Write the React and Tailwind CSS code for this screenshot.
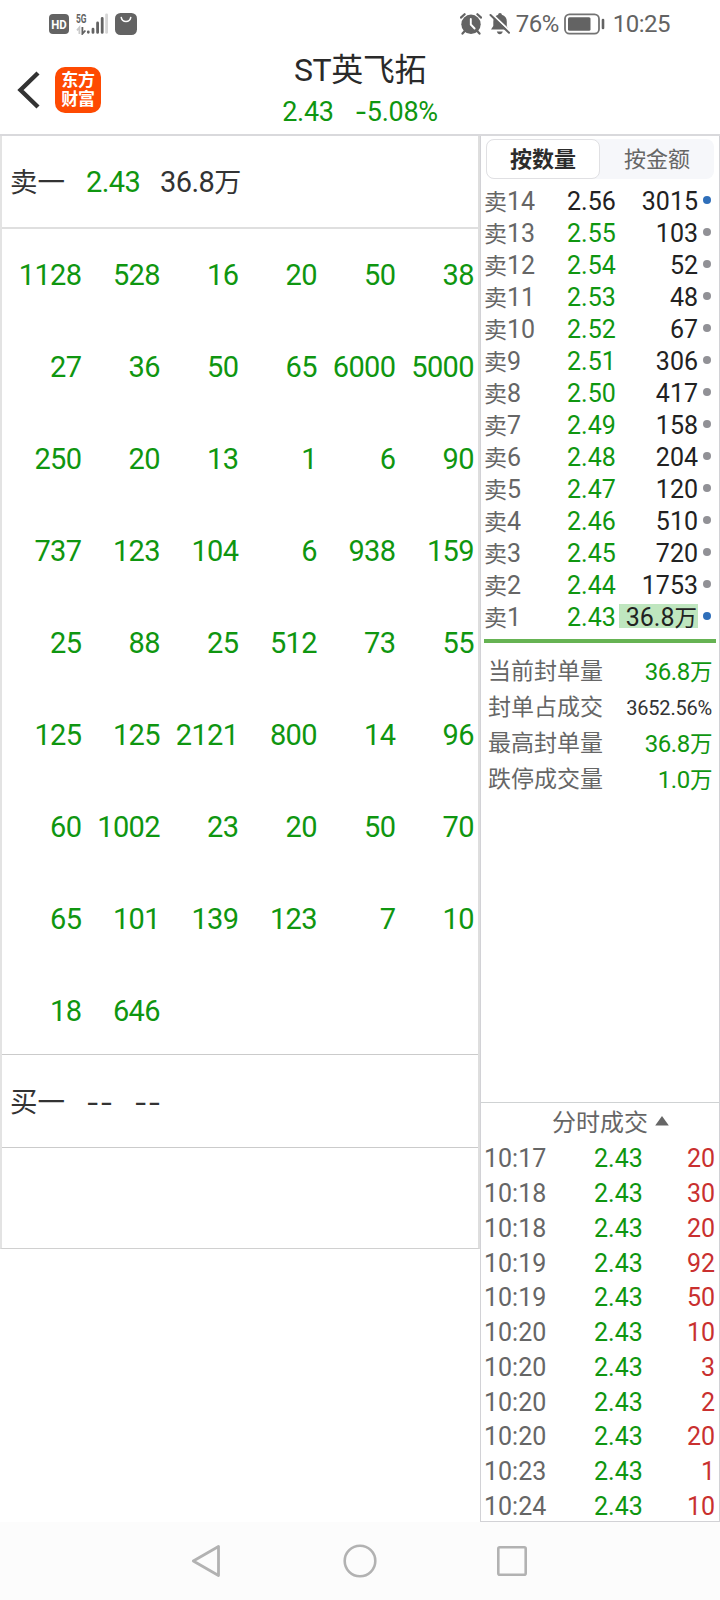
import React from "react";

const sells = [
  {level: 14, price: "2.56", amount: "3015", flat: true, active: true},
  {level: 13, price: "2.55", amount: "103"},
  {level: 12, price: "2.54", amount: "52"},
  {level: 11, price: "2.53", amount: "48"},
  {level: 10, price: "2.52", amount: "67"},
  {level: 9, price: "2.51", amount: "306"},
  {level: 8, price: "2.50", amount: "417"},
  {level: 7, price: "2.49", amount: "158"},
  {level: 6, price: "2.48", amount: "204"},
  {level: 5, price: "2.47", amount: "120"},
  {level: 4, price: "2.46", amount: "510"},
  {level: 3, price: "2.45", amount: "720"},
  {level: 2, price: "2.44", amount: "1753"},
  {level: 1, price: "2.43", amount: "36.8", wan: true, active: true},
];

const orders = [
  1128, 528, 16, 20, 50, 38,
  27, 36, 50, 65, 6000, 5000,
  250, 20, 13, 1, 6, 90,
  737, 123, 104, 6, 938, 159,
  25, 88, 25, 512, 73, 55,
  125, 125, 2121, 800, 14, 96,
  60, 1002, 23, 20, 50, 70,
  65, 101, 139, 123, 7, 10,
  18, 646,
];

const stats = [
  {label: "当前封单量", value: "36.8", wan: true},
  {label: "封单占成交", value: "3652.56%"},
  {label: "最高封单量", value: "36.8", wan: true},
  {label: "跌停成交量", value: "1.0", wan: true},
];

const trades = [
  ["10:17", 20],
  ["10:18", 30],
  ["10:18", 20],
  ["10:19", 92],
  ["10:19", 50],
  ["10:20", 10],
  ["10:20", 3],
  ["10:20", 2],
  ["10:20", 20],
  ["10:23", 1],
  ["10:24", 10],
];

const StatusBar = () => (
  <div className="flex h-[46px] items-center pl-[49px] pr-[50px] pt-px text-[#636363]">
    <svg className="h-5 w-5" viewBox="0 0 20 20">
      <rect width="20" height="20" rx="4" fill="#636363" />
      <text x="10" y="14.6" textAnchor="middle" fontSize="13" fontWeight="700" fill="#fff" textLength="15.500" lengthAdjust="spacingAndGlyphs">
        HD
      </text>
    </svg>
    <svg className="ml-[7px] h-[22px] w-8" viewBox="0 0 32 22">
      <text x="0" y="9.5" fontSize="12" fontWeight="700" fill="#636363" textLength="10.5" lengthAdjust="spacingAndGlyphs">
        5G
      </text>
      <path d="M3.4 21v-6.5L1 17.3" stroke="#c9c9c9" strokeWidth="1.8" fill="none" />
      <path d="M6.4 14v6.8l3-3.3" stroke="#636363" strokeWidth="1.8" fill="none" />
      <g strokeWidth="2.8" strokeLinecap="round" stroke="#636363">
        <path d="M12.3 18.9v.4M17 16.2v3.2M21.6 10v9.4M26.2 5.3v14.1" />
        <path d="M30.6 1.8v17.6" stroke="#d6d6d6" />
      </g>
    </svg>
    <svg className="ml-[7px] h-[22px] w-[22px]" viewBox="0 0 22 22">
      <rect width="22" height="22" rx="5.5" fill="#636363" />
      <path d="M6.3 4.6a4.8 4.8 0 0 0 9.4 0" stroke="#fff" strokeWidth="1.6" fill="none" strokeLinecap="round" />
    </svg>

    <div className="ml-auto flex items-center">
      {/* alarm */}
      <svg className="h-[22px] w-[22px]" viewBox="0 0 22 22">
        <circle cx="11" cy="11.3" r="9.7" fill="#636363" />
        <path d="M.9 4.6 4.6 1.2M21.1 4.6l-3.7-3.4M4.8 18l-2.3 2.6M17.2 18l2.3 2.6" stroke="#636363" strokeWidth="2.2" strokeLinecap="round" />
        <path d="M10.8 6v5.5l3.8 4" stroke="#fff" strokeWidth="1.9" fill="none" strokeLinecap="round" />
      </svg>
      {/* muted bell */}
      <svg className="ml-[7px] h-[22px] w-[22px]" viewBox="0 0 22 22">
        <path d="M11 0c1.2 0 1.8.8 1.8 1.8 3.3.8 5 3.4 5 6.6V13l1.5 3.6H2l2.3-3.6V8.400c0-3.200 1.6-5.800 4.900-6.600C9.200.8 9.800 0 11 0z" fill="#636363" />
        <path d="M7.8 18.600h6c-.4 1.600-1.500 2.600-3 2.600s-2.600-1-3-2.600z" fill="#636363" />
        <path d="M2.9 1 21.5 18.6" stroke="#fff" strokeWidth="2" />
        <path d="M1.5 2 20 19.7" stroke="#636363" strokeWidth="2" strokeLinecap="round" />
      </svg>
      <span className="ml-[5px] text-2xl leading-none tracking-[-0.5px]">76%</span>
      <svg className="ml-[5px] h-[22px] w-[42px]" viewBox="0 0 42 22">
        <rect x="1" y="1.3" width="34" height="19.4" rx="4.5" fill="none" stroke="#737373" strokeWidth="1.8" />
        <rect x="4" y="4.3" width="22.5" height="13.4" rx="1.5" fill="#636363" />
        <path d="M39 7v8" stroke="#636363" strokeWidth="2.6" strokeLinecap="round" />
      </svg>
      <span className="ml-[7px] text-2xl leading-none tracking-[-0.5px]">10:25</span>
    </div>
  </div>
);

const Header = () => (
  <div className="grid h-[88px] grid-cols-[1fr_auto_1fr]">
    <div className="flex items-start pl-[17px] pt-[21px]">
      <svg className="h-[46px] w-6" viewBox="0 0 24 46">
        <path d="M21 6 3.5 23 21 40" fill="none" stroke="#333" strokeWidth="4.4" />
      </svg>
      <div className="ml-[14px] flex h-[46px] w-[46px] flex-col items-center justify-center rounded-[10px] bg-[#fe4a02] text-[17px] font-bold leading-[19px] tracking-[-0.3px] text-white">
        <span>东方</span>
        <span>财富</span>
      </div>
    </div>
    <div className="flex flex-col items-center pt-[3px]">
      <div className="text-[32px] leading-[42px] tracking-[-0.4px] text-[#2a2a2a]">ST英飞拓</div>
      <div className="flex gap-[21px] pt-px text-[27px] leading-[40px] tracking-[-0.3px] text-[#0f9610]">
        <span>2.43</span>
        <span>
          <span className="font-[Inter,sans-serif]">-</span>5.08%
        </span>
      </div>
    </div>
    <div />
  </div>
);

const OrderQueue = () => (
  <div className="h-[1113px] w-[480px] border-b border-l-2 border-r-2 border-b-[#d0d0d0] border-l-[#e3e3e3] border-r-[#dedede]">
    <div className="flex h-[93px] items-center border-b-2 border-[#dfdfdf] pl-2 pt-[3px] text-[29px] tracking-[-0.6px] text-[#333]">
      <span className="w-[76px] text-[27.5px] tracking-normal">卖一</span>
      <span className="w-[74px] text-[#0f9610]">2.43</span>
      <span>
        36.8<span className="text-[27px]">万</span>
      </span>
    </div>
    <div className="grid h-[825px] auto-rows-[92px] grid-cols-6 overflow-hidden pl-px pr-1 text-right text-[29px] leading-[93px] tracking-[-0.6px] text-[#0f9610]">
      {orders.map((n, i) => (
        <span key={i}>{n}</span>
      ))}
    </div>
    <div className="flex h-[94px] items-center border-y border-[#cbcbcb] pl-2 pt-1 text-[29px] text-[#333]">
      <span className="w-[76px] text-[27.5px]">买一</span>
      <span className="w-12 font-[Inter,sans-serif] tracking-[0.5px]">--</span>
      <span className="font-[Inter,sans-serif] tracking-[0.5px]">--</span>
    </div>
  </div>
);

const SellList = () => (
  <div className="pt-[7px] text-[25px] leading-8">
    {sells.map((s) => (
      <div key={s.level} className="flex h-8 items-center pl-[3px] pr-[8px]">
        <span className="w-[63px] text-[#666]">
          <span className="text-[23px]">卖</span>
          {s.level}
        </span>
        <span className={`w-[69px] pl-5 ${s.flat ? "text-[#222]" : "text-[#0f9610]"}`}>{s.price}</span>
        <span className="flex flex-1 justify-end text-[#222]">
          <span className={s.wan ? "mb-1 h-6 w-[79px] bg-[#bfe6bf] pr-px text-right leading-[27px]" : ""}>
            {s.amount}
            {s.wan && <span className="text-[22.5px]">万</span>}
          </span>
        </span>
        <span className={`mb-[5px] ml-[5px] h-2 w-2 rounded-full ${s.active ? "bg-[#2f6fba]" : "bg-[#919196]"}`}></span>
      </div>
    ))}
  </div>
);

const SidePanel = () => (
  <div className="flex h-[1386px] w-[240px] flex-col border-x border-b border-[#d2d2d6]">
    <div className="ml-[5px] mr-[5px] mt-[3px] flex h-10 rounded-lg bg-[#f6f7fa] text-[22px] leading-10">
      <div className="w-[114px] rounded-lg border border-[#e0e0e3] bg-white text-center font-bold text-[#2c2c2c]">按数量</div>
      <div className="flex-1 pt-px text-center text-[#666]">按金额</div>
    </div>
    <SellList />
    <div className="ml-[3px] mr-[3px] mt-[5px] h-1 bg-[#66b353]"></div>
    <div className="mt-[11px] pl-[7px] pr-[7px]">
      {stats.map((s) => (
        <div key={s.label} className="flex h-9 items-center justify-between">
          <span className="text-[23px] leading-9 text-[#666]">{s.label}</span>
          {s.wan ? (
            <span className="text-2xl leading-9 tracking-[-0.4px] text-[#0f9610]">
              {s.value}
              <span className="text-[22.5px]">万</span>
            </span>
          ) : (
            <span className="text-[20px] leading-9 tracking-[-0.2px] text-[#333]">{s.value}</span>
          )}
        </div>
      ))}
    </div>
    <div className="mt-auto h-[419px] border-t border-[#cfd2d3]">
      <div className="flex h-[39px] items-center justify-center gap-[7px] pl-[21px] text-2xl text-[#666]">
        分时成交
        <svg className="mb-1 h-[10px] w-[14px]" viewBox="0 0 14 10">
          <path d="M7 0 13.8 9.5H.2z" fill="#666" />
        </svg>
      </div>
      {trades.map(([time, amount], i) => (
        <div key={i} className="flex h-[34.75px] items-center pl-[3px] pr-1 text-[25px] leading-[34px]">
          <span className="w-[110px] text-[#666]">{time}</span>
          <span className="text-[#0f9610]">2.43</span>
          <span className="ml-auto text-[#c9302f]">{amount}</span>
        </div>
      ))}
    </div>
  </div>
);

const NavBar = () => (
  <div className="grid h-[78px] grid-cols-[1fr_36px_1fr] items-start bg-[#fcfcfc] pl-[190px] pr-[190px] pt-[21px]">
    <svg className="h-[36px] w-[32px]" viewBox="0 0 32 36" fill="none" stroke="#b2b2b2" strokeWidth="2.8" strokeLinejoin="round">
      <path d="M28.5 3.5v29L3.3 18z" />
    </svg>
    <svg className="h-[36px] w-[36px]" viewBox="0 0 36 36" fill="none" stroke="#b2b2b2" strokeWidth="2.6">
      <circle cx="18" cy="18" r="15.3" />
    </svg>
    <svg className="ml-auto h-[36px] w-[36px]" viewBox="0 0 36 36" fill="none" stroke="#b2b2b2" strokeWidth="2.6">
      <rect x="4.3" y="4.3" width="27.4" height="27.4" rx="1.5" />
    </svg>
  </div>
);

export default function App() {
  return (
    <div className="h-[1600px] w-[720px] overflow-hidden bg-white font-[Roboto,'Noto_Sans_CJK_SC',sans-serif]">
      <StatusBar />
      <Header />
      <div className="h-0.5 bg-[#d9d9dc]"></div>
      <div className="flex h-[1386px] items-start">
        <OrderQueue />
        <SidePanel />
      </div>
      <NavBar />
    </div>
  );
}
